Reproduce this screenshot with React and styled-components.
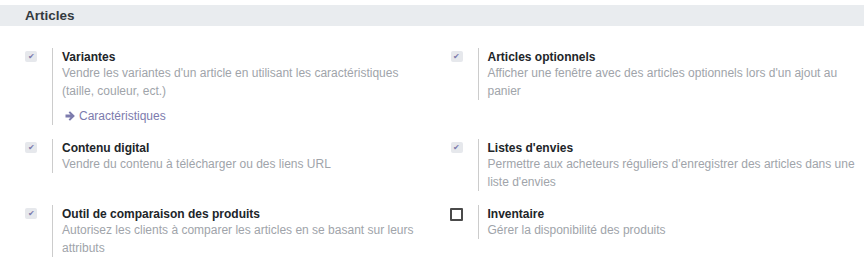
import React from "react";
import styled, { createGlobalStyle } from "styled-components";

const GlobalStyle = createGlobalStyle`
  body {
    margin: 0;
    background: #fff;
    font-family: "Liberation Sans", Arial, sans-serif;
    font-size: 12px;
    color: #212529;
  }
`;

const Page = styled.div`
  padding-top: 5px;
`;

const SectionTitle = styled.h2`
  margin: 0;
  background: #e9ecef;
  height: 21px;
  line-height: 21px;
  padding-left: 25px;
  font-size: 13.5px;
  font-weight: bold;
  color: #343a40;
`;

const Grid = styled.div`
  display: grid;
  grid-template-columns: 1fr 1fr;
  padding: 22px 0 0 13px;
  row-gap: 14px;
`;

const Box = styled.div`
  display: flex;
  padding: 0 ${(p) => (p.$last ? "0" : "12px")} 0 12px;
  align-items: flex-start;
`;

const LeftPane = styled.div`
  width: 27px;
  flex: none;
  padding-top: 3px;
`;

const Check = styled.span`
  display: block;
  width: 12px;
  height: 11px;
  border-radius: 2px;
  background: #e6e8ec;
  color: #7c7bad;
  font-size: 8px;
  line-height: 11px;
  text-align: center;
`;

const EmptyCheck = styled.span`
  display: block;
  width: 9px;
  height: 9px;
  margin-left: -1px;
  border: 2px solid #4a4a4a;
  border-radius: 1px;
`;

const RightPane = styled.div`
  border-left: 1px solid #cccccc;
  padding-left: 9px;
  flex: 1;
`;

const Label = styled.div`
  font-weight: bold;
  line-height: 15px;
  padding-top: 2px;
  margin-bottom: -1px;
  color: #212529;
`;

const Desc = styled.div`
  color: #a0a4aa;
  line-height: 18px;
`;

const Link = styled.a`
  display: inline-flex;
  align-items: center;
  gap: 3px;
  margin: 8px 0 1px 3px;
  color: #7c7bad;
  text-decoration: none;
  line-height: 16px;
`;

function ArrowIcon() {
  return (
    <svg width="11" height="10" viewBox="0 0 11 10">
      <path d="M0.5 3.5H5.5L3.6 1.6 5 0.2 9.9 5 5 9.8 3.6 8.4 5.5 6.5H0.5Z" fill="#7c7bad" />
    </svg>
  );
}

const settings = [
  {
    label: "Variantes",
    desc: "Vendre les variantes d'un article en utilisant les caractéristiques (taille, couleur, ect.)",
    checked: true,
    link: "Caractéristiques",
  },
  {
    label: "Articles optionnels",
    desc: "Afficher une fenêtre avec des articles optionnels lors d'un ajout au panier",
    checked: true,
  },
  {
    label: "Contenu digital",
    desc: "Vendre du contenu à télécharger ou des liens URL",
    checked: true,
  },
  {
    label: "Listes d'envies",
    desc: "Permettre aux acheteurs réguliers d'enregistrer des articles dans une liste d'envies",
    checked: true,
  },
  {
    label: "Outil de comparaison des produits",
    desc: "Autorisez les clients à comparer les articles en se basant sur leurs attributs",
    checked: true,
  },
  {
    label: "Inventaire",
    desc: "Gérer la disponibilité des produits",
    checked: false,
  },
];

export default function App() {
  return (
    <Page>
      <GlobalStyle />
      <SectionTitle>Articles</SectionTitle>
      <Grid>
        {settings.map((s, i) => (
          <Box key={s.label} $last={i % 2 === 1}>
            <LeftPane>{s.checked ? <Check>✔</Check> : <EmptyCheck />}</LeftPane>
            <RightPane>
              <Label>{s.label}</Label>
              <Desc>{s.desc}</Desc>
              {s.link && (
                <Link href="#">
                  <ArrowIcon />
                  {s.link}
                </Link>
              )}
            </RightPane>
          </Box>
        ))}
      </Grid>
    </Page>
  );
}
